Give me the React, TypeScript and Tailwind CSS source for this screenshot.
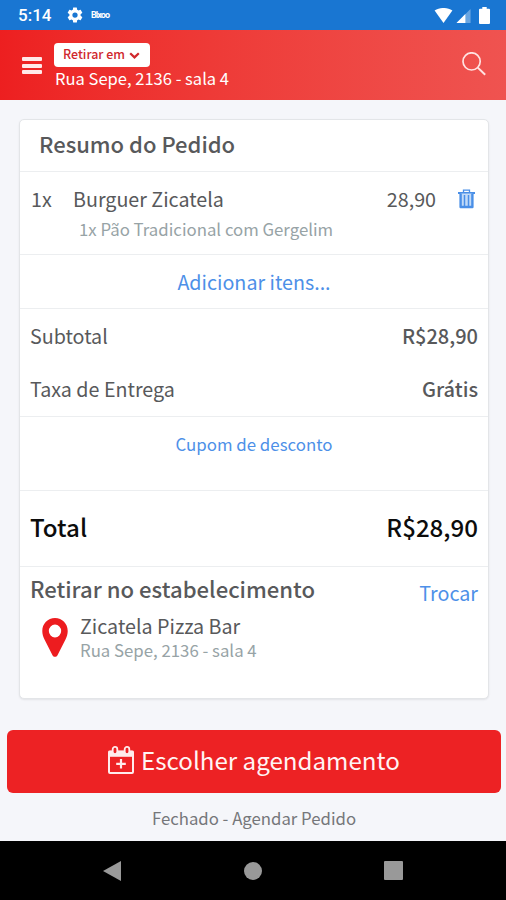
import type { ReactNode } from "react";

function StatusBar() {
  return (
    <div className="flex h-[30px] items-center bg-[#1976d2] pl-[18px] pr-[16px] text-white">
      <span className="w-[34px] whitespace-nowrap font-['Roboto'] text-[17px] font-medium leading-[30px]">5:14</span>
      <svg className="ml-[14px] h-[18px] w-[18px]" viewBox="0 0 24 24" fill="currentColor">
        <path d="M19.43 12.98c.04-.32.07-.64.07-.98s-.03-.66-.07-.98l2.11-1.65c.19-.15.24-.42.12-.64l-2-3.46c-.12-.22-.39-.3-.61-.22l-2.49 1c-.52-.4-1.08-.73-1.69-.98l-.38-2.65A.49.49 0 0 0 14 2h-4c-.25 0-.46.18-.49.42l-.38 2.65c-.61.25-1.17.59-1.69.98l-2.49-1c-.23-.09-.49 0-.61.22l-2 3.46c-.13.22-.07.49.12.64l2.11 1.65c-.04.32-.07.65-.07.98s.03.66.07.98l-2.11 1.65c-.19.15-.24.42-.12.64l2 3.46c.12.22.39.3.61.22l2.49-1c.52.4 1.08.73 1.69.98l.38 2.65c.03.24.24.42.49.42h4c.25 0 .46-.18.49-.42l.38-2.65c.61-.25 1.17-.59 1.69-.98l2.49 1c.23.09.49 0 .61-.22l2-3.46c.12-.22.07-.49-.12-.64l-2.11-1.65zM12 15.5a3.500 3.500 0 1 1 0-7 3.500 3.500 0 0 1 0 7z" />
      </svg>
      <span className="ml-[7px] w-[20px] whitespace-nowrap font-['Roboto'] text-[9px] font-bold leading-[12px] tracking-[-0.9px]">Blxoo</span>
      <svg className="ml-auto h-[15px] w-[19px]" viewBox="0 0 19 16" fill="currentColor">
        <path d="M0 2.600C5.600-.9 13.400-.9 19 2.600L9.500 16z" />
      </svg>
      <svg className="ml-[3px] h-[15px] w-[15px]" viewBox="0 0 15 16" fill="currentColor">
        <path d="M0 16L15 1v15z" opacity="0.35" />
        <path d="M0 16L9.500 6.500V16z" />
      </svg>
      <svg className="ml-[8px] h-[17px] w-[11px]" viewBox="0 0 11 17" fill="currentColor">
        <path d="M3.300 0h4.400v1.800H10a1 1 0 0 1 1 1V16a1 1 0 0 1-1 1H1a1 1 0 0 1-1-1V2.800a1 1 0 0 1 1-1h2.300z" />
      </svg>
    </div>
  );
}

function Header() {
  return (
    <header className="flex h-[70px] bg-linear-to-r from-[#ed1f20] to-[#ef5350] text-white">
      <div className="ml-[22px] mt-[27px] flex h-[17px] w-[20px] flex-col justify-between">
        <span className="h-[4px] rounded-[1px] bg-[#ffe9e9]" />
        <span className="h-[4px] rounded-[1px] bg-[#ffe9e9]" />
        <span className="h-[4px] rounded-[1px] bg-[#ffe9e9]" />
      </div>
      <div className="ml-[12px] mt-[13px] flex flex-col items-start">
        <button className="flex h-[24px] w-[96px] items-center whitespace-nowrap rounded-[4px] bg-white pl-[9px] text-[12.45px] font-medium leading-[22px] text-[#d0282d]">
          <span className="-mt-[3px]">Retirar em</span>
          <svg className="ml-[4px] h-[7px] w-[11px]" viewBox="0 0 11 7" fill="none" stroke="currentColor" strokeWidth="2.2">
            <path d="M1.200 1.200L5.500 5.400 9.800 1.200" />
          </svg>
        </button>
        <span className="-mt-px ml-px whitespace-nowrap text-[16.550px] leading-[24px]">Rua Sepe, 2136 - sala 4</span>
      </div>
      <svg className="ml-auto mr-[20px] mt-[22px] h-[24px] w-[24px]" viewBox="0 0 24 24" fill="none" stroke="#ffe3e2" strokeWidth="1.700">
        <circle cx="9.600" cy="9.400" r="8.600" />
        <path d="M15.800 15.600L23.200 22.800" strokeWidth="2" />
      </svg>
    </header>
  );
}

function Row({ className, children }: { className: string; children: ReactNode }) {
  return <div className={`border-b border-[#eceef0] ${className}`}>{children}</div>;
}

function TrashIcon() {
  return (
    <svg className="mt-[2px] h-[20px] w-[17px]" viewBox="0 0 17 20" fill="none" stroke="#4a8fe7">
      <path d="M5.500 3V1.200h6V3" strokeWidth="1.300" />
      <path d="M0 4h17" strokeWidth="2" />
      <path d="M2.600 4.500V18h11.800V4.500" fill="#c3dbf8" strokeWidth="2.400" strokeLinejoin="round" />
      <path d="M6.500 6v11M10.500 6v11" strokeWidth="1.500" />
    </svg>
  );
}

function OrderCard() {
  return (
    <main className="ml-[19px] mr-[17px] mt-[19px] h-[580px] rounded-[5px] border border-[#e3e5e8] bg-white text-[19.7px] leading-[24px] text-[#58595b] shadow-[0_1px_2px_rgba(0,0,0,0.08)]">
      <Row className="h-[52px] pl-[19px] pt-[11px]">
        <h1 className="text-[22px] font-medium">Resumo do Pedido</h1>
      </Row>
      <Row className="h-[83px] pt-[15px]">
        <div className="flex pl-[11px] pr-[13px]">
          <span className="w-[42px]">1x</span>
          <span>Burguer Zicatela</span>
          <span className="ml-auto mr-[22px]">28,90</span>
          <TrashIcon />
        </div>
        <p className="ml-[59px] mt-[6px] text-[16.8px] text-[#97a3a6]">1x Pão Tradicional com Gergelim</p>
      </Row>
      <Row className="flex h-[54px] items-center justify-center text-[#4d90e8]">
        <a>Adicionar itens...</a>
      </Row>
      <Row className="h-[108px] px-[10px] pt-[15px]">
        <div className="flex justify-between">
          <span>Subtotal</span>
          <span className="text-[20px] font-medium">R$28,90</span>
        </div>
        <div className="mt-[29px] flex justify-between">
          <span>Taxa de Entrega</span>
          <span className="text-[20px] font-medium">Grátis</span>
        </div>
      </Row>
      <Row className="h-[74px] pt-[15px] text-center text-[16.85px] text-[#4d90e8]">
        <a>Cupom de desconto</a>
      </Row>
      <Row className="flex h-[76px] justify-between px-[10px] pt-[24px] text-[24.1px] font-medium text-[#0c0c0c]">
        <span>Total</span>
        <span>R$28,90</span>
      </Row>
      <section className="px-[10px] pt-[9px]">
        <div className="flex justify-between">
          <h2 className="text-[22.1px] font-medium">Retirar no estabelecimento</h2>
          <a className="mt-[5px] text-[#4d90e8]">Trocar</a>
        </div>
        <div className="mt-[9px] flex">
          <svg className="ml-[12px] mt-[4px] h-[39px] w-[26px]" viewBox="0 0 27 39" preserveAspectRatio="none">
            <path fillRule="evenodd" fill="#ed1c1f" d="M13.5 0C6 0 .3 5.600.3 13c0 3.300 1 5.700 2.300 8.400L10.900 37.300c1.100 2 4.100 2 5.200 0L24.400 21.400C25.700 18.700 26.700 16.300 26.700 13 26.700 5.600 21 0 13.500 0zm0 6.600a6.400 6.400 0 1 1 0 12.800 6.400 6.400 0 0 1 0-12.800z" />
          </svg>
          <div className="ml-[12px]">
            <p>Zicatela Pizza Bar</p>
            <p className="text-[16.8px] text-[#97a3a6]">Rua Sepe, 2136 - sala 4</p>
          </div>
        </div>
      </section>
    </main>
  );
}

function CalendarPlusIcon() {
  return (
    <svg className="h-[28px] w-[26px]" viewBox="0 0 26 28" fill="none" stroke="#ffecec">
      <rect x="1" y="5.500" width="24" height="21.500" rx="1" strokeWidth="2" />
      <path d="M0.500 7.800h25" strokeWidth="6" />
      <rect x="4.700" y="0.900" width="4.600" height="7.200" rx="2.300" fill="#ed2224" strokeWidth="1.800" />
      <rect x="16.700" y="0.900" width="4.600" height="7.200" rx="2.300" fill="#ed2224" strokeWidth="1.800" />
      <path d="M13 13v9.500M8.200 17.800h9.600" strokeWidth="2.200" />
    </svg>
  );
}

function NavBar() {
  return (
    <nav className="mt-auto flex h-[59px] items-center bg-black pl-[103px]">
      <svg className="h-[20px] w-[18px]" viewBox="0 0 18 20" fill="#999">
        <path d="M18 0v20L0 10z" />
      </svg>
      <span className="ml-[123px] h-[18px] w-[18px] rounded-full bg-[#999]" />
      <span className="ml-[122px] h-[19px] w-[19px] rounded-[1px] bg-[#999]" />
    </nav>
  );
}

export default function App() {
  return (
    <div className="flex h-[900px] w-[506px] flex-col overflow-hidden bg-[#f5f6fa] font-['Noto_Sans_CJK_SC','Open_Sans',sans-serif]">
      <StatusBar />
      <Header />
      <OrderCard />
      <button className="ml-[7px] mt-[31px] flex h-[63px] w-[494px] items-center justify-center rounded-[6px] bg-[#ed2224] pb-[3px] text-[24.15px] leading-[30px] text-[#fff4f4]">
        <CalendarPlusIcon />
        <span className="ml-[7px] whitespace-nowrap">Escolher agendamento</span>
      </button>
      <p className="mt-[13px] pl-[2px] text-center text-[16.75px] leading-[24px] text-[#75777a]">Fechado - Agendar Pedido</p>
      <NavBar />
    </div>
  );
}
